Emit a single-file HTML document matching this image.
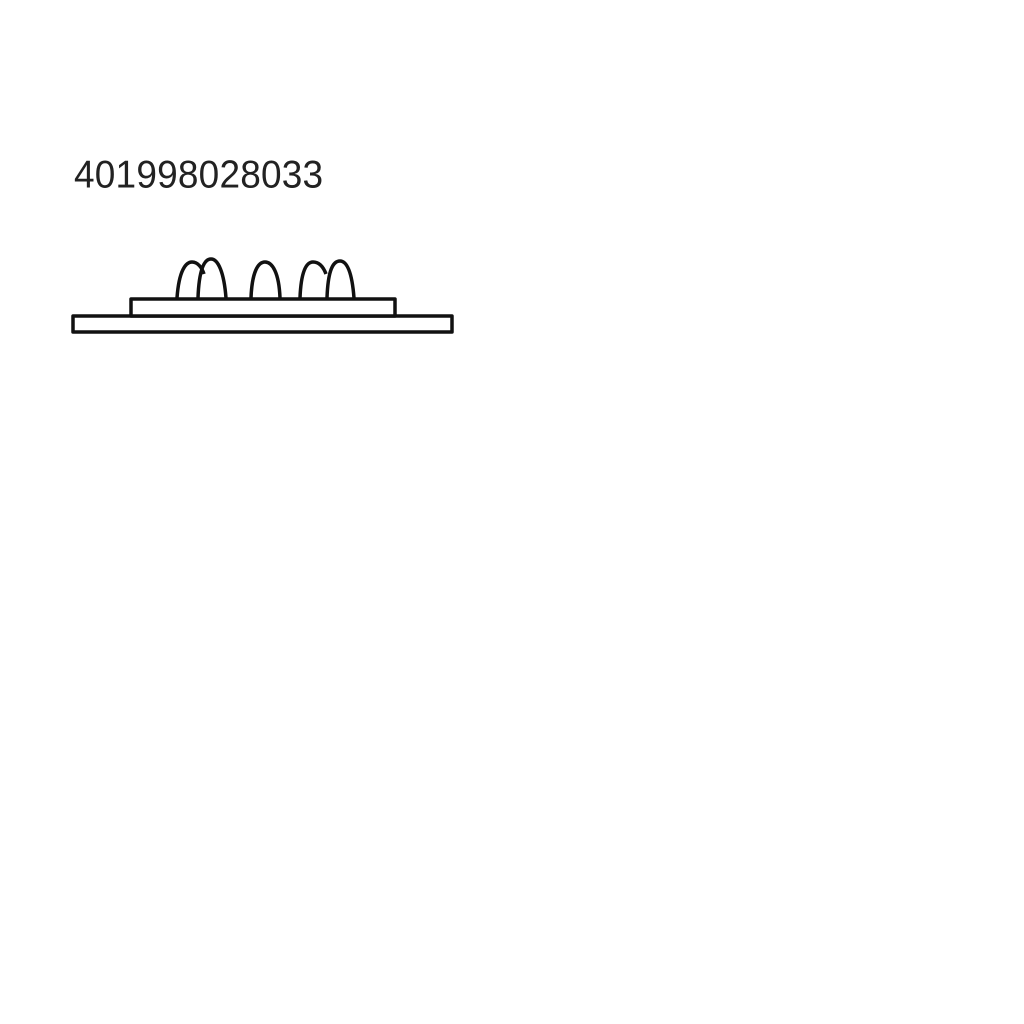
<!DOCTYPE html>
<html><head><style>
body{margin:0;width:1024px;height:1024px;background:#fff;position:relative;overflow:hidden}
.t{position:absolute;left:74px;top:153px;font-family:"Liberation Sans",sans-serif;font-size:37px;color:#222;letter-spacing:0.2px;transform:scaleY(1.05);transform-origin:left top}
svg{position:absolute;left:0;top:0}
</style></head><body>
<div class="t">401998028033</div>
<svg width="1024" height="1024" fill="none" stroke="#111" stroke-width="3.5" stroke-linejoin="round">
<rect x="73" y="316" width="379" height="16"/>
<rect x="131" y="299" width="264" height="17" fill="#fff"/>
<path d="M177 298 C179 270 186 262 192 262 C198 262 202 268 204 274"/>
<path d="M198 298 C199 270 204 259 211 259 C218 259 224 272 226 298"/>
<path d="M251 298 C252 272 258 262 265 262 C272 262 279 272 280 298"/>
<path d="M300 298 C301 272 306 262 313 262 C319 262 323 266 326 274"/>
<path d="M327 298 C328 270 333 261 340 261 C347 261 352 272 354 298"/>
</svg>
</body></html>
